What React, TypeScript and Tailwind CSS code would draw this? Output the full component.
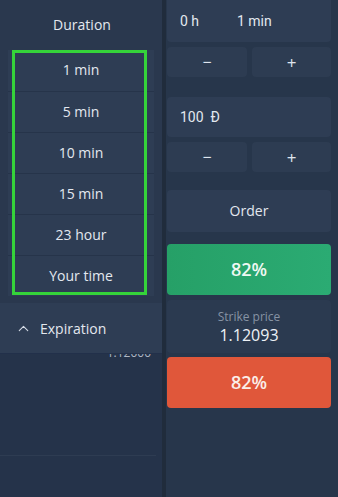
import { ChevronUp } from "lucide-react";

const durations = ["1 min", "5 min", "10 min", "15 min", "23 hour", "Your time"];

function StepButtons() {
  return (
    <div className="flex gap-[5px] h-[30px]">
      <button className="w-[80px] h-full rounded-[4px] bg-[#2d3c52] text-[#dfe5ee] text-[16px] leading-none">−</button>
      <button className="flex-1 h-full rounded-[4px] bg-[#2d3c52] text-[#dfe5ee] text-[17px] leading-none">+</button>
    </div>
  );
}

export default function App() {
  return (
    <div
      className="w-[338px] h-[497px] flex overflow-hidden bg-[#25334a] text-[#e3e8ef]"
      style={{ fontFamily: '"Open Sans", "Liberation Sans", sans-serif' }}
    >
      {/* left: duration dropdown */}
      <div className="w-[162px] flex flex-col shrink-0">
        <div className="relative h-[303px] bg-[#2a384e]">
          <div className="h-[50px] flex items-center justify-center text-[14px] pl-[2px] pb-[2px]">Duration</div>
          <div className="mx-[8px] bg-[#2e3d54]">
            {durations.map((d, i) => (
              <div
                key={d}
                className={`h-[41px] flex items-center justify-center text-[14px] pb-[2px] ${i > 0 ? "border-t border-[#26344a]" : ""}`}
              >
                {d}
              </div>
            ))}
          </div>
          <div className="absolute left-[12px] top-[50px] w-[135px] h-[245px] border-[3px] border-[#35d43a] pointer-events-none" />
        </div>
        <div className="relative z-10 h-[50px] bg-[#2e3d54] flex items-center pl-[15px] gap-[8px] text-[14px] shadow-[0_1px_0_#22304a]">
          <ChevronUp size={17} strokeWidth={1.5} className="text-[#d5dce6]" />
          <span>Expiration</span>
        </div>
        <div className="flex-1 bg-[#25334a] relative">
          <div className="text-right pr-[11px] text-[12px] text-[#aeb7c4] leading-none -mt-[6px]">1.12000</div>
          <div className="mt-[96px] mr-[6px] h-px bg-[#2e3c52]" />
        </div>
      </div>

      {/* divider */}
      <div className="w-[4px] bg-[#202c3c] shrink-0" />

      {/* right column */}
      <div className="flex-1 flex flex-col pl-[1px] pr-[7px] bg-[#27364b]">
        <div
          className="h-[42px] rounded-b-[4px] bg-[#2e3d54] flex items-center pl-[13px] text-[14px] text-[#e3e8ef]"
          style={{ fontFamily: 'Roboto, "Liberation Sans", sans-serif' }}
        >
          <span className="w-[57px]">0 h</span>
          <span>1 min</span>
        </div>
        <div className="mt-[5px]">
          <StepButtons />
        </div>
        <div
          className="mt-[20px] h-[40px] rounded-[4px] bg-[#2e3d54] flex items-center pl-[13px] text-[14px]"
          style={{ fontFamily: 'Roboto, "Liberation Sans", sans-serif' }}
        >
          100&nbsp;&nbsp;Đ
        </div>
        <div className="mt-[5px]">
          <StepButtons />
        </div>
        <div className="mt-[18px] h-[42px] rounded-[4px] bg-[#2e3d54] flex items-center justify-center text-[14px] pb-[2px]">
          Order
        </div>
        <div className="mt-[12px] h-[51px] rounded-[4px] bg-gradient-to-r from-[#26a067] to-[#2bab73] flex items-center justify-center text-[18px] font-semibold text-[#eef8f2]">
          82%
        </div>
        <div className="mt-[5px] h-[53px] rounded-[4px] bg-[#2b3a50] flex flex-col items-center justify-center gap-[2px]">
          <span className="text-[12px] text-[#8793a4] leading-[14px]">Strike price</span>
          <span className="text-[16px] text-[#eef2f7] leading-[18px]">1.12093</span>
        </div>
        <div className="mt-[4px] h-[51px] rounded-[4px] bg-[#e0573a] flex items-center justify-center text-[18px] font-semibold text-[#fbeee9]">
          82%
        </div>
      </div>
    </div>
  );
}
